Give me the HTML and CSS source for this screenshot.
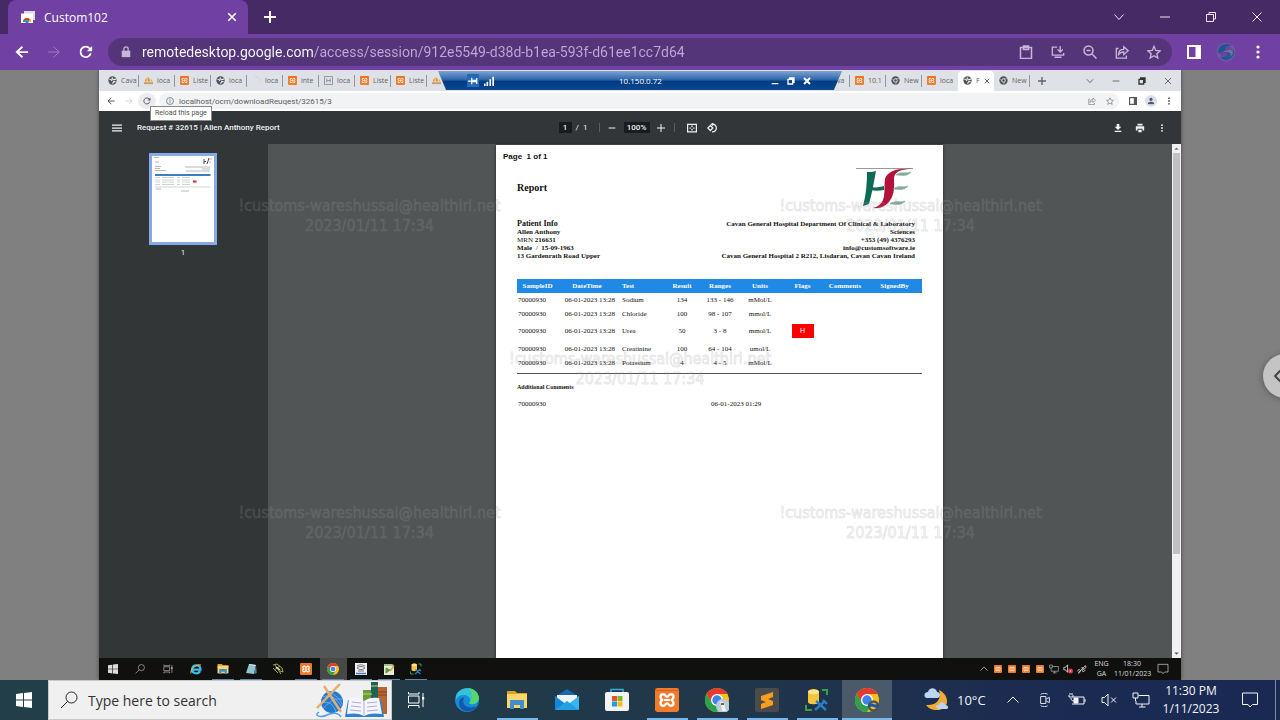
FILE: index.html
```html
<!DOCTYPE html>
<html lang="en">
<head>
<meta charset="utf-8">
<title>Custom102</title>
<link rel="stylesheet" href="styles.css">
</head>
<body>
<svg class="sprite" aria-hidden="true">
  <symbol id="i-close" viewBox="0 0 12 12"><path d="M1.500 1.500l9 9M10.500 1.500l-9 9"/></symbol>
  <symbol id="i-plus" viewBox="0 0 12 12"><path d="M6 0v12M0 6h12"/></symbol>
  <symbol id="i-minus" viewBox="0 0 12 12"><path d="M1 6h10"/></symbol>
  <symbol id="i-down" viewBox="0 0 12 12"><path d="M1.500 3.500L6 8.500l4.500-5"/></symbol>
  <symbol id="i-up" viewBox="0 0 12 12"><path d="M.5 8.500L6 3l5.500 5.500"/></symbol>
  <symbol id="i-restore" viewBox="0 0 12 12"><path d="M1.500 3.500h7v7h-7zM4 3.500v-2h6.500V8h-2"/></symbol>
  <symbol id="i-back" viewBox="0 0 16 16"><path d="M15 8H2.500M8.500 2L2 8l6.500 6"/></symbol>
  <symbol id="i-fwd" viewBox="0 0 16 16"><path d="M1 8h12.500M7.500 2L14 8l-6.500 6"/></symbol>
  <symbol id="i-reload" viewBox="0 0 16 16"><path d="M13.500 9.500A6 6 0 1 1 12.300 4L14 5.600"/><path d="M15 1v6H9z" fill="currentColor" stroke="none"/></symbol>
  <symbol id="i-lock" viewBox="0 0 12 14"><path d="M1 5.500h10V13H1z" fill="currentColor" stroke="none"/><path d="M3.500 6V3.500a2.500 2.500 0 0 1 5 0V6"/></symbol>
  <symbol id="i-share" viewBox="0 0 16 16"><path d="M4 4H1.500v11H13v-3M4 11c0-4 2-6 6-6V2l5 4.500-5 4.500V8C7 8 5.500 9 4 11z"/></symbol>
  <symbol id="i-star" viewBox="0 0 16 16"><path d="M8 1.500l2 4.700 5 .4-3.800 3.300 1.200 5L8 12.200 3.600 14.900l1.200-5L1 6.600l5-.4z"/></symbol>
  <symbol id="i-panel" viewBox="0 0 14 14"><path d="M1 1h12v12H1z"/><path d="M8.500 1H13v12H8.500z" fill="currentColor" stroke="none"/></symbol>
  <symbol id="i-dots" viewBox="0 0 4 14"><g fill="currentColor" stroke="none"><circle cx="2" cy="2" r="1.600"/><circle cx="2" cy="7" r="1.600"/><circle cx="2" cy="12" r="1.600"/></g></symbol>
  <symbol id="i-clip" viewBox="0 0 14 14"><path d="M1.500 2.500h11v11h-11zM4.500 1h5v3.500h-5z"/></symbol>
  <symbol id="i-install" viewBox="0 0 16 14"><path d="M7 1.500H1.500v9h13V8M10.500 0v6.500M7.500 4l3 3 3-3M4 13h8"/></symbol>
  <symbol id="i-zoomout" viewBox="0 0 14 14"><path d="M9 9l4.500 4.500M3.500 5.500h4"/><circle cx="5.500" cy="5.500" r="4.500"/></symbol>
  <symbol id="i-search" viewBox="0 0 18 18"><circle cx="11.500" cy="6.500" r="5.500"/><path d="M7.500 10.500L1 17"/></symbol>
  <symbol id="i-chat" viewBox="0 0 18 18"><path d="M1.500 2h15v11.500h-5L9 16l-2-2.500H1.500z"/></symbol>
  <symbol id="i-net" viewBox="0 0 18 16"><path d="M6.500 3.500H17v8.500H4V9M10 12v3M7 15h6.500M1 1h5v5H1zM3.500 6v3"/></symbol>
  <symbol id="i-mute" viewBox="0 0 16 14"><path d="M1 4.500h2.500L7 1v12L3.500 9.500H1zM10 4.500l5 5M15 4.500l-5 5"/></symbol>
  <symbol id="i-taskview" viewBox="0 0 18 18"><path d="M1.500 5h10.500v7H1.500zM1.500 1v2H12V1M1.500 17v-2.500H12V17M16 2v14"/><path d="M15 6h2.200v2.500H15z" fill="currentColor" stroke="none"/></symbol>
  <symbol id="i-win" viewBox="0 0 16 16"><path fill="currentColor" stroke="none" d="M0 2l7-1v6.500H0zM8 .9L16 0v7.500H8zM0 8.500h7V15l-7-1zM8 8.500h8V16l-8-1z"/></symbol>
  <symbol id="i-globe" viewBox="0 0 10 10"><circle cx="5" cy="5" r="4.600" fill="#50555a" stroke="none"/><path d="M1.500 3.500l2 .5 1 1.500M5 1.500l-.5 1.500L6 4l3-.5M5 8.500L6.500 6 8.500 6.500" stroke="#e9ecee" stroke-width="1.200"/></symbol>
  <symbol id="i-pma" viewBox="0 0 10 10"><path d="M0 7h10v2H0z" fill="#c69a66" stroke="none"/><path d="M1 6c0-2 1-3 2-4v4zM4 6V1c2 1 3 3 3 5zM8 6V3l1.500 3z" fill="#f59222" stroke="none"/></symbol>
  <symbol id="i-xampp" viewBox="0 0 10 10"><rect width="10" height="10" rx="1" fill="#ef7b2c" stroke="none"/><path d="M0 1h10" stroke="#d65f1c" stroke-width=".4"/><path d="M3.400 2.600C2 2.600 2 4.400 3.100 5 2 5.600 2 7.400 3.400 7.400c1 0 .9-1 1.600-1s.6 1 1.600 1C8 7.400 8 5.600 6.900 5 8 4.400 8 2.600 6.600 2.600c-1 0-.9 1-1.600 1s-.6-1-1.600-1z" stroke="#fff" stroke-width="1" stroke-linejoin="round"/><path d="M3.800 5h2.400" stroke="#fff" stroke-width=".9"/></symbol>
  <symbol id="i-greyx" viewBox="0 0 10 10"><path d="M.5.500h9v9h-9zM3 3v4M7 3v4M3 5h4" stroke="#8a8d8f"/></symbol>
  <symbol id="i-chromegrey" viewBox="0 0 10 10"><circle cx="5" cy="5" r="4.600" fill="#4f5459" stroke="none"/><circle cx="5" cy="5" r="1.900" fill="#4f5459" stroke="#e4e7e9"/><path d="M5 3h4.200M3.300 6L1.200 2.800M6.700 6L4.800 9.400" stroke="#e4e7e9" stroke-width=".6"/></symbol>
  <symbol id="i-chrome" viewBox="0 0 24 24"><circle cx="12" cy="12" r="12" fill="#fbc116" stroke="none"/><path fill="#e33b2e" stroke="none" d="M1.600 6A12 12 0 0 1 22.400 6H12l-5.200 9z"/><path fill="#2ba24c" stroke="none" d="M1.600 6a12 12 0 0 0 10.400 18l5.200-9-5.200 3-5.200-3z"/><circle cx="12" cy="12" r="6" fill="#fff" stroke="none"/><circle cx="12" cy="12" r="4.700" fill="#3f83ee" stroke="none"/></symbol>
  <symbol id="i-folder" viewBox="0 0 22 20"><path fill="#e0a020" stroke="none" d="M1 1h8l2 2h10v5H1z"/><path fill="#ffd767" stroke="none" d="M1 4h20v14H1z"/><path fill="#3f8fd0" stroke="none" d="M4 10h14v9h-4v-4H8v4H4z"/></symbol>
  <symbol id="i-db" viewBox="0 0 24 24"><path fill="#f5c53c" stroke="none" d="M3 4c0-4 11-4 11 0v10c0 3-11 3-11 0z"/><ellipse cx="8.500" cy="4" rx="5.500" ry="2.300" fill="#ffe48a" stroke="none"/><path stroke="#35a045" stroke-width="2" d="M17 2h5v5M1 17v5h6"/><path stroke="#2f7cc4" stroke-width="2.400" d="M10 22l10-9M11 13l10 9M18 12l4 4"/></symbol>
</svg>

<header class="tabstrip">
  <div class="tab">
    <svg class="favicon" viewBox="0 0 14 12"><path d="M3 0h11v9H3z" fill="#ddd"/><path d="M0 2.500h12V12H0z" fill="#fff"/><path d="M2 11a4 4 0 0 1 8 0H8l-2-2-2 2z" fill="#e33b2e"/><path d="M2 11h2.500V9L3 8z" fill="#2ba24c"/><path d="M8 11h2.500L9.500 8 8 9z" fill="#fbc116"/><circle cx="6" cy="10.500" r="1.800" fill="#3f83ee"/></svg>
    <span class="tab-title">Custom102</span>
    <button class="ico s10 bold" aria-label="Close tab"><svg><use href="#i-close"/></svg></button>
  </div>
  <button class="ico s12 bold newtab" aria-label="New tab"><svg><use href="#i-plus"/></svg></button>
  <div class="caption">
    <button class="ico s12" aria-label="Search tabs"><svg><use href="#i-down"/></svg></button>
    <button class="ico s12" aria-label="Minimize"><svg><use href="#i-minus"/></svg></button>
    <button class="ico s12" aria-label="Restore"><svg><use href="#i-restore"/></svg></button>
    <button class="ico s12" aria-label="Close"><svg><use href="#i-close"/></svg></button>
  </div>
</header>

<nav class="toolbar">
  <button class="ico s14 bold" aria-label="Back"><svg><use href="#i-back"/></svg></button>
  <button class="ico s14 dim" aria-label="Forward"><svg><use href="#i-fwd"/></svg></button>
  <button class="ico s14 bold" aria-label="Reload"><svg><use href="#i-reload"/></svg></button>
  <div class="omnibox">
    <span class="ico s12 lock"><svg><use href="#i-lock"/></svg></span>
    <input class="url" aria-label="Address" value="remotedesktop.google.com/access/session/912e5549-d38d-b1ea-593f-d61ee1cc7d64">
    <button class="ico s14" aria-label="Clipboard"><svg><use href="#i-clip"/></svg></button>
    <button class="ico s14" aria-label="Install"><svg><use href="#i-install"/></svg></button>
    <button class="ico s14" aria-label="Zoom"><svg><use href="#i-zoomout"/></svg></button>
    <button class="ico s14" aria-label="Share"><svg><use href="#i-share"/></svg></button>
    <button class="ico s14" aria-label="Bookmark"><svg><use href="#i-star"/></svg></button>
  </div>
  <button class="ico s14 bold" aria-label="Side panel"><svg><use href="#i-panel"/></svg></button>
  <button class="ico s20" aria-label="Profile"><svg viewBox="0 0 20 20"><circle cx="10" cy="10" r="8" stroke="#6c5a9e" stroke-width="3"/><path d="M2 11C2 2 11 0 16 4c-5-1-8 2-7 4s6 1 9-1" fill="#1c5699" stroke="none"/><path d="M18 9c1 8-9 12-14 6 5 1 8-1 7-3s-6-1-8 0" fill="#24559a" stroke="none"/><path d="M6 9c3 2 6 0 8 2s0 4-3 4c7 0 7-6 4-7s-6 2-9 1z" fill="#77728c" stroke="none"/></svg></button>
  <button class="ico s14 menu" aria-label="Menu"><svg><use href="#i-dots"/></svg></button>
</nav>

<main class="stage">
  <section class="remote">
    <div class="rtabs">
      <div class="rtab"><svg><use href="#i-globe"/></svg><span>Cava</span></div>
      <div class="rtab"><svg><use href="#i-pma"/></svg><span>loca</span></div>
      <div class="rtab"><svg><use href="#i-xampp"/></svg><span>Liste</span></div>
      <div class="rtab"><svg><use href="#i-globe"/></svg><span>loca</span></div>
      <div class="rtab"><svg viewBox="0 0 10 10"><path d="M3 1a5 5 0 0 1 6 6" stroke="#c4d6ee"/></svg><span>loca</span></div>
      <div class="rtab"><svg><use href="#i-xampp"/></svg><span>inte</span></div>
      <div class="rtab"><svg><use href="#i-greyx"/></svg><span>loca</span></div>
      <div class="rtab"><svg><use href="#i-xampp"/></svg><span>Liste</span></div>
      <div class="rtab"><svg><use href="#i-xampp"/></svg><span>Liste</span></div>
      <div class="rtab last"><svg><use href="#i-pma"/></svg></div>
      <div class="rtab push"><span>ava</span></div>
      <div class="rtab"><svg><use href="#i-xampp"/></svg><span>10.1</span></div>
      <div class="rtab"><svg><use href="#i-chromegrey"/></svg><span>New</span></div>
      <div class="rtab last"><svg><use href="#i-xampp"/></svg><span>loca</span></div>
      <div class="rtab active"><svg><use href="#i-globe"/></svg><span>F</span><button class="ico s6 bold" aria-label="Close tab"><svg><use href="#i-close"/></svg></button></div>
      <div class="rtab"><svg><use href="#i-chromegrey"/></svg><span>New</span></div>
      <button class="ico s8 bold rnew" aria-label="New tab"><svg><use href="#i-plus"/></svg></button>
      <div class="rcaption">
        <button class="ico s8" aria-label="Search tabs"><svg><use href="#i-down"/></svg></button>
        <button class="ico s8" aria-label="Minimize"><svg><use href="#i-minus"/></svg></button>
        <button class="ico s8 bold" aria-label="Restore"><svg><use href="#i-restore"/></svg></button>
        <button class="ico s8" aria-label="Close"><svg><use href="#i-close"/></svg></button>
      </div>
      <div class="rdp">
        <button class="ico s10 pin" aria-label="Pin"><svg viewBox="0 0 12 12"><path d="M0 6h4M4.500 2v8M10.500 2.500v7" stroke-width="1.500"/><path d="M5 4.500h5v3H5z" fill="currentColor" stroke="none"/></svg></button>
        <span class="ico s10"><svg viewBox="0 0 12 12"><path d="M1 12V9M4 12V7M7.500 12V4M11 12V1" stroke-width="2"/></svg></span>
        <span class="rdp-title">10.150.0.72</span>
        <button class="ico s8 bold" aria-label="Minimize session"><svg viewBox="0 0 12 12"><path d="M1 10h10"/></svg></button>
        <button class="ico s8 bold" aria-label="Restore session"><svg><use href="#i-restore"/></svg></button>
        <button class="ico s8 heavy" aria-label="Close session"><svg><use href="#i-close"/></svg></button>
      </div>
    </div>

    <div class="rbar">
      <button class="ico s8 bold" aria-label="Back"><svg><use href="#i-back"/></svg></button>
      <button class="ico s8 faint" aria-label="Forward"><svg><use href="#i-fwd"/></svg></button>
      <button class="ico s8 bold halo" aria-label="Reload this page"><svg><use href="#i-reload"/></svg></button>
      <div class="rbox">
        <span class="ico s8 site"><svg viewBox="0 0 12 12"><circle cx="6" cy="6" r="5.200"/><path d="M6 5v4M6 2.800v1.300"/></svg></span>
        <input class="rurl" aria-label="Remote address" value="localhost/ocm/downloadReuqest/32615/3">
        <button class="ico s8" aria-label="Share"><svg><use href="#i-share"/></svg></button>
        <button class="ico s8" aria-label="Bookmark"><svg><use href="#i-star"/></svg></button>
      </div>
      <button class="ico s8 bold" aria-label="Side panel"><svg><use href="#i-panel"/></svg></button>
      <button class="ico s8 avatar" aria-label="Profile"><svg viewBox="0 0 12 12"><path fill="currentColor" stroke="none" d="M6 1a2.500 2.500 0 1 1 0 5 2.500 2.500 0 0 1 0-5zM1 11c0-5 10-5 10 0z"/></svg></button>
      <button class="ico s8" aria-label="Menu"><svg><use href="#i-dots"/></svg></button>
      <div class="tip" role="tooltip">Reload this page</div>
    </div>

    <div class="pbar">
      <button class="ico s10 bold" aria-label="Toggle sidebar"><svg viewBox="0 0 12 12"><path d="M0 2.500h12M0 6h12M0 9.500h12"/></svg></button>
      <h1 class="ptitle">Request # 32615 | Allen Anthony Report</h1>
      <div class="pctl">
        <input class="pnum" aria-label="Page number" value="1">
        <span class="ptotal">/&nbsp; 1</span>
        <i class="bar"></i>
        <button class="ico s8 bold" aria-label="Zoom out"><svg><use href="#i-minus"/></svg></button>
        <input class="pzoom" aria-label="Zoom level" value="100%">
        <button class="ico s8 bold" aria-label="Zoom in"><svg><use href="#i-plus"/></svg></button>
        <i class="bar"></i>
        <button class="ico s10 bold" aria-label="Fit to page"><svg viewBox="0 0 12 12"><path d="M.7 1.500h10.600v9H.7zM6 3v2M6 7v2M3 6h1.500M7.500 6H9"/></svg></button>
        <button class="ico s10 bold" aria-label="Rotate"><svg viewBox="0 0 12 12"><path d="M4 3L1 6l3 3 3-3zM6 1.500c7-.5 7 9.500 0 9M7.500 0L5.500 1.500l2 1.500"/></svg></button>
      </div>
      <div class="pend">
        <button class="ico s8" aria-label="Download"><svg viewBox="0 0 12 12"><path fill="currentColor" stroke="none" d="M4 0h4v4h3L6 9 1 4h3zM1 10.300h10V12H1z"/></svg></button>
        <button class="ico s10" aria-label="Print"><svg viewBox="0 0 12 12"><path fill="currentColor" stroke="none" d="M3 1h6v2H3zM1 4h10v5H9V7H3v2H1zM4 8h4v3H4z"/></svg></button>
        <button class="ico s8" aria-label="More"><svg><use href="#i-dots"/></svg></button>
      </div>
    </div>

    <div class="viewer">
      <aside class="side">
        <button class="thumb" aria-label="Page one thumbnail">
          <svg viewBox="0 0 62 86"><path d="M0 0h62v86H0z" fill="#fff"/><path d="M2 1.500h5M3 6h4M3 10.500h6M3 12.500h5M3 14.500h11M33 11h25M50 13h8M34 15h24M4 33h5M29 35h8" stroke="#888" stroke-width=".6"/><path d="M52 3v5M52 5.500h2" stroke="#2a6050"/><path d="M57 2l-2 6" stroke="#b02040"/><path d="M57 3h3M57 6h2" stroke="#7aa090" stroke-width=".7"/><path d="M3 19h55.500" stroke="#3a7fc0" stroke-width="2"/><path d="M3 21.500h5M10 21.500h12M25 21.500h3M30 21.500h8M3 24h5M10 24h12M25 24h3M30 24h8M3 26h5M10 26h12M25 26h3M30 26h8M3 28.500h5M10 28.500h12M25 28.500h3M30 28.500h8" stroke="#9aa" stroke-width=".5"/><path d="M3 31h55.500" stroke="#aaa" stroke-width=".5"/><path d="M41 24.500h3.500v2H41z" fill="#e0202a"/></svg>
        </button>
        <span class="thumb-no">1</span>
      </aside>
      <div class="canvas">
        <article class="page">
          <p class="pageno">Page&nbsp; 1 of 1</p>
          <div class="rhead">
            <h2>Report</h2>
            <svg class="logo" viewBox="0 0 58 42" role="img" aria-label="HSE">
              <path d="M0 .5h57" stroke="#999"/>
              <path d="M11 4c3 0 6 0 9-1-2 11-4 22-7 33-2 1-4 1-6 2 3-11 4-22 4-34z" fill="#0d6b55"/>
              <path d="M15 19c5 1 9 0 13-1v4c-5 1-9 1-14 0z" fill="#0d6b55"/>
              <path d="M56 1C46 1 39 3 38 10c0 7 1 12-2 19-4 8-10 12-19 11 7-2 10-6 11-12s0-11 1-17C31 3 42 0 56 1z" fill="#b3123c"/>
              <path d="M40 7c5-4 9-1 15-3-4 5-9 3-15 3zM37 21c5-4 9-1 15-3-4 5-9 3-15 3zM34 36c5-4 9-1 15-3-4 5-9 3-15 3z" fill="#83ab9a" stroke="#83ab9a" stroke-width=".6"/>
            </svg>
          </div>
          <div class="info">
            <address><strong class="who">Patient Info</strong><b>Allen Anthony</b><span>MRN <b>216631</b></span><span><b>Male</b> &nbsp;/&nbsp; <b>15-09-1963</b></span><b>13 Gardenrath Road Upper</b></address>
            <address class="org"><b>Cavan General Hospital Department Of Clinical &amp; Laboratory Sciences</b><b>+353 (49) 4376293</b><b>info@customsoftware.ie</b><b>Cavan General Hospital 2 R212, Lisdaran, Cavan Cavan Ireland</b></address>
          </div>
          <table class="results">
            <colgroup><col class="c41"><col class="c58"><col class="c46"><col class="c40"><col class="c36"><col class="c44"><col class="c41"><col class="c44"><col></colgroup>
            <thead><tr><th>SampleID</th><th>DateTime</th><th>Test</th><th>Result</th><th>Ranges</th><th>Units</th><th>Flags</th><th>Comments</th><th>SignedBy</th></tr></thead>
            <tbody>
              <tr><td>70000930</td><td>06-01-2023 13:28</td><td>Sodium</td><td>134</td><td>133 - 146</td><td>mMol/L</td><td></td><td></td><td></td></tr>
              <tr><td>70000930</td><td>06-01-2023 13:28</td><td>Chloride</td><td>100</td><td>98 - 107</td><td>mmol/L</td><td></td><td></td><td></td></tr>
              <tr class="high"><td>70000930</td><td>06-01-2023 13:28</td><td>Urea</td><td>50</td><td>3 - 8</td><td>mmol/L</td><td><span class="flag">H</span></td><td></td><td></td></tr>
              <tr><td>70000930</td><td>06-01-2023 13:28</td><td>Creatinine</td><td>100</td><td>64 - 104</td><td>umol/L</td><td></td><td></td><td></td></tr>
              <tr><td>70000930</td><td>06-01-2023 13:28</td><td>Potassium</td><td>4</td><td>4 - 5</td><td>mMol/L</td><td></td><td></td><td></td></tr>
            </tbody>
          </table>
          <section class="extra">
            <h3>Additional Comments</h3>
            <div class="note"><span>70000930</span><time>06-01-2023 01:29</time></div>
          </section>
        </article>
      </div>
      <div class="scroll"><svg viewBox="0 0 8 8"><path d="M2 5l2-2 2 2z" fill="#777"/></svg><i></i><svg viewBox="0 0 8 8"><path d="M2 3l2 2 2-2z" fill="#555"/></svg></div>
    </div>

    <footer class="rtask">
      <div class="rapps">
        <button class="ico s10" aria-label="Remote start"><svg><use href="#i-win"/></svg></button>
        <button class="ico s10" aria-label="Remote search"><svg><use href="#i-search"/></svg></button>
        <button class="ico s10" aria-label="Remote task view"><svg><use href="#i-taskview"/></svg></button>
        <button class="ico s12" aria-label="Internet Explorer"><svg viewBox="0 0 24 24"><path d="M4 13h17c0-11-16-11-17 0 0 9 13 10 16 3" stroke="#3fb8ee" stroke-width="4.500"/><path d="M2 21C-1 15 12 1 22 4" stroke="#f3c33c" stroke-width="2"/></svg></button>
        <button class="ico s12 run" aria-label="Remote files"><svg><use href="#i-folder"/></svg></button>
        <button class="ico s12 run" aria-label="Notepad"><svg viewBox="0 0 12 12"><g stroke="none"><path d="M4 1l7 1-2 9-8-1z" fill="#8fc3cf"/><path d="M4 1l7 1v1L4 2z" fill="#d7e9ee"/><path d="M9 11l2-9 .8 8z" fill="#4a7f92"/></g></svg></button>
        <button class="ico s12" aria-label="Interface tool"><svg viewBox="0 0 12 12"><path d="M1 2l4-1 5 4 1 4-3-1M1 5l5 5M3 2l6 9M2 7l6-4" stroke="#a5ab42"/><path d="M4 4l4 3" stroke="#ddd" stroke-width="1.500"/></svg></button>
        <button class="ico s12 run" aria-label="Remote XAMPP"><svg><use href="#i-xampp"/></svg></button>
        <button class="ico s12 run cur" aria-label="Remote Chrome"><svg><use href="#i-chrome"/></svg></button>
        <button class="ico s12 run" aria-label="Lookup"><svg viewBox="0 0 12 12"><path d="M0 0h12v12H0z" fill="#eef1f4" stroke="none"/><path d="M2 3c3-2 6-1 8 0M2 5c2-2 6-2 8 0-2 2-6 2-8 0zM3 8h6" stroke="#445" stroke-width=".7"/><path d="M1 10.500h10" stroke="#4a7dc0" stroke-width="1.500"/></svg></button>
        <button class="ico s12 run" aria-label="Editor"><svg viewBox="0 0 12 12"><path d="M1 1h8l2 2v9H1z" fill="#e6edda" stroke="none"/><path d="M1 2h10" stroke="#5b9a35"/><path d="M3 5l4 2-4 3z" fill="#5b9a35" stroke="#5b9a35"/><path d="M7 8l4-5" stroke="#d9a030" stroke-width="1.500"/></svg></button>
        <button class="ico s12 run" aria-label="Remote database tool"><svg><use href="#i-db"/></svg></button>
      </div>
      <div class="rtray">
        <span class="ico s8"><svg><use href="#i-up"/></svg></span>
        <span class="ico s8"><svg><use href="#i-xampp"/></svg></span>
        <span class="ico s8"><svg><use href="#i-xampp"/></svg></span>
        <span class="ico s8"><svg><use href="#i-xampp"/></svg></span>
        <span class="ico s8"><svg><use href="#i-xampp"/></svg></span>
        <span class="ico s10"><svg><use href="#i-net"/></svg></span>
        <span class="ico s10"><svg viewBox="0 0 12 12"><path d="M1 4h2l2.500-3v9L3 7H1z"/><circle cx="9" cy="8.500" r="3" fill="#e0303a" stroke="none"/><path d="M8 7.500l2 2M10 7.500l-2 2"/></svg></span>
        <span class="ico s10"><svg viewBox="0 0 12 12"><path d="M1 9c0-4 4-2 3 0s-3 3-2 1L10 2l1 2-5 4c1 2 3 1 4-1M5 5c1-2 3 0 2 2"/></svg></span>
        <span class="lang">ENG<br>GA</span>
        <span class="rclock">18:30<br>11/01/2023</span>
        <button class="ico s12 rnote" aria-label="Remote notifications"><svg><use href="#i-chat"/></svg></button>
      </div>
    </footer>

    <div class="wm a">!customs-wareshussai@healthirl.net<br>2023/01/11 17:34</div>
    <div class="wm b">!customs-wareshussai@healthirl.net<br>2023/01/11 17:34</div>
    <div class="wm c">!customs-wareshussai@healthirl.net<br>2023/01/11 17:34</div>
    <div class="wm d">!customs-wareshussai@healthirl.net<br>2023/01/11 17:34</div>
    <div class="wm e">!customs-wareshussai@healthirl.net<br>2023/01/11 17:34</div>
  </section>
  <button class="drawer" aria-label="Session options"><svg viewBox="0 0 12 14"><path d="M9 1L3 7l6 6"/></svg></button>
</main>

<footer class="taskbar">
  <button class="ico s16 start" aria-label="Start"><svg><use href="#i-win"/></svg></button>
  <label class="search">
    <span class="ico s18"><svg><use href="#i-search"/></svg></span>
    <input type="text" placeholder="Type here to search" aria-label="Search">
    <svg class="art" viewBox="0 0 72 36">
      <circle cx="17" cy="20" r="11" fill="#2479cc"/><path d="M8 15c7-3 13 0 18 9M7 21c6-2 11 0 14 9M12 11c6 0 12 4 15 11M8 27c5-7 12-11 19-10" stroke="#74b6f2" stroke-width=".8"/><path d="M2 26L25 2M9 4l17 26" stroke="#e4ad72" stroke-width="2.500"/><path d="M4 30c-6 4 2 6 8 3s12-2 14 2" stroke="#4a9ee8" stroke-width="1.500"/>
      <path d="M48 8h9v25h-9z" fill="#6c9c37"/><path d="M56 0h7v31h-7z" fill="#206353"/><path d="M63 5h9v27h-9z" fill="#b96434"/><path d="M63 10h9M63 13h9" stroke="#87401e"/><path d="M56 4h7M48 12h9" stroke="#bdd685"/><path d="M33 18l16 2 17-2 3 17H30z" fill="#2d83d0"/><path d="M34 16c6-1 12 0 15 3 4-3 9-4 15-3l3 16c-7-1-13-1-18 2-5-3-11-3-17-2z" fill="#f6f5ff"/><path d="M49 19v14M37 20l9 1M36 24l10 1M35 28l11 1M52 21l10-1M52 25l10-1M52 29l11-1" stroke="#aeadd2"/>
    </svg>
  </label>
  <button class="ico s18 tview" aria-label="Task view"><svg><use href="#i-taskview"/></svg></button>
  <div class="apps">
    <button class="ico s24" aria-label="Edge"><svg viewBox="0 0 24 24"><circle cx="12" cy="12" r="12" fill="#168bd7"/><path d="M1 8C5-3 23-2 24 10c0 6-8 8-10 5 3-3 0-8-5-8-4 0-7 2-8 5z" fill="#35c2d8"/><path d="M13 0c8 1 13 9 10 13-3 4-8 3-9 2 5-5 3-11-1-15z" fill="#58d66c"/><path d="M9 10c-3 7 4 12 13 8-6 9-18 6-18-3 0-4 3-6 5-5z" fill="#1459aa"/></svg></button>
    <button class="ico s22 run" aria-label="File Explorer"><svg><use href="#i-folder"/></svg></button>
    <button class="ico s24" aria-label="Mail"><svg viewBox="0 0 24 24"><path d="M0 9l12-8 12 8v13H0z" fill="#1769b5"/><path d="M2 7h20v8H2z" fill="#eef7fc"/><path d="M0 8l12 9L0 22z" fill="#1687d8"/><path d="M24 8l-12 9 12 5z" fill="#38b6f0"/><path d="M0 22l12-9 12 9z" fill="#23a0e4"/></svg></button>
    <button class="ico s24" aria-label="Store"><svg viewBox="0 0 24 24"><path d="M6 5V1.500h12V5" stroke="#35aee0" stroke-width="1.500"/><rect y="4" width="24" height="19" rx="2" fill="#f3f3f3"/><path d="M7 8h5v5H7z" fill="#e8512d"/><path d="M12.500 8h5v5h-5z" fill="#80b928"/><path d="M7 13.500h5v5H7z" fill="#1d9fe2"/><path d="M12.500 13.500h5v5h-5z" fill="#f9b91f"/></svg></button>
    <button class="ico s24 run" aria-label="XAMPP"><svg><use href="#i-xampp"/></svg></button>
    <button class="ico s24 run" aria-label="Chrome"><svg viewBox="0 0 24 24"><use href="#i-chrome"/><circle cx="18" cy="18" r="7" fill="#b6cde0"/><path d="M15 13l4 2 2 8h-4l-1-6z" fill="#f6f2e8"/><path d="M16 15h3v2h-3z" fill="#7a6244"/></svg></button>
    <button class="ico s24 run" aria-label="Sublime Text"><svg viewBox="0 0 24 24"><rect width="24" height="24" rx="2" fill="#4b4b4b"/><path d="M18 4v5l-5 2 5 2v4L6 21v-5l5-2-5-2V8z" fill="#ff9d1f"/></svg></button>
    <button class="ico s24 run" aria-label="Database tool"><svg><use href="#i-db"/></svg></button>
    <button class="ico s24 run cur" aria-label="Chrome session"><svg viewBox="0 0 24 24"><use href="#i-chrome"/><circle cx="18.500" cy="18" r="4.500" stroke="#4d545c" stroke-width="2.500"/><path d="M14 18c3-4 6 3 9-1" stroke="#1c5699" stroke-width="3"/></svg></button>
  </div>
  <div class="tray">
    <svg class="moon" viewBox="0 0 25 24"><path d="M15 2c12 6 10 20-2 20-5 0-9-2-11-5 10 1 16-5 13-15z" fill="#f3ab33"/><path d="M3 10c-4-1-3-6 1-6 1-5 8-5 9 0 4 0 4 6 0 6zM14 21c-3-1-2-5 1-4 1-4 6-3 6 0 4 0 4 4 1 4z" fill="#bcd4f6"/></svg>
    <span class="temp">10°C</span>
    <button class="ico s12" aria-label="Hidden icons"><svg><use href="#i-up"/></svg></button>
    <span class="ico s14"><svg viewBox="0 0 14 16"><path d="M2 4h6v8H2zM8 7l4-2v6L8 9M2 1.500C5 0 8 0 10 1.500M2 14.500c3 1.500 6 1.500 8 0"/></svg></span>
    <span class="ico s18"><svg viewBox="0 0 18 14"><path d="M5 4h11v7H4M17 6v3M1 2v2h4V2M2 0v2M4 0v2M3 5c0 2 1 3 3 3"/><path d="M6 5h4v5H6z" fill="currentColor"/></svg></span>
    <span class="ico s16"><svg><use href="#i-mute"/></svg></span>
    <span class="ico s18"><svg><use href="#i-net"/></svg></span>
    <span class="clock">11:30 PM<br>1/11/2023</span>
    <button class="ico s18 notif" aria-label="Notifications"><svg><use href="#i-chat"/></svg></button>
  </div>
</footer>
</body>
</html>
```
FILE: styles.css
```css
* { box-sizing: border-box; }
body {
  margin: 0;
  height: 100vh;
  display: flex;
  flex-direction: column;
  overflow: hidden;
  font-family: "Open Sans", "Noto Sans", sans-serif;
  color: #fff;
}
button, input { margin: 0; padding: 0; border: 0; background: none; color: inherit; font: inherit; outline: 0; border-radius: 0; }
h1, h2, h3, p, address { margin: 0; font-style: normal; }
svg { fill: none; display: block; }
.sprite { position: absolute; width: 0; height: 0; }

/* Icon boxes */
.ico { display: flex; align-items: center; justify-content: center; flex: none; }
.ico > svg { stroke: currentColor; stroke-width: 1; }
.bold > svg { stroke-width: 2; }
.heavy > svg { stroke-width: 3; }
.s6 > svg { width: 6px; height: 6px; }
.s8 > svg { width: 8px; height: 8px; }
.s10 > svg { width: 10px; height: 10px; }
.s12 > svg { width: 12px; height: 12px; }
.s14 > svg { width: 14px; height: 14px; }
.s16 > svg { width: 16px; height: 16px; }
.s18 > svg { width: 18px; height: 18px; }
.s20 > svg { width: 20px; height: 20px; }
.s22 > svg { width: 22px; height: 22px; }
.s24 > svg { width: 24px; height: 24px; }

/* Local browser */
.tabstrip { flex: none; height: 34px; display: flex; align-items: center; background: #462a66; padding-left: 8px; }
.tab { width: 240px; height: 34px; display: flex; align-items: center; gap: 9px; padding: 0 11px 0 13px; background: #7040a2; border-radius: 8px 8px 0 0; font-size: 12px; }
.favicon { width: 14px; height: 12px; }
.tab-title { flex: 1; }
.newtab { width: 44px; }
.caption { margin-left: auto; display: flex; color: #eee4f6; }
.caption .ico { width: 46px; height: 28px; }
.toolbar { flex: none; height: 36px; display: flex; align-items: center; background: #7040a2; padding: 0 7px 0 6px; }
.toolbar > .ico { width: 32px; height: 28px; }
.toolbar > .menu { width: 31px; }
.dim { color: #a686c8; }
.omnibox { flex: 1; height: 28px; margin: 0 6px; display: flex; align-items: center; background: #55357a; border-radius: 14px; padding: 0 2px 0 12px; color: #c7b6d8; }
.omnibox .ico { width: 32px; }
.omnibox .lock { width: 12px; margin-right: 10px; }
.omnibox .ico > svg { stroke-width: 1.5; }
.url {
  flex: 1; min-width: 0; height: 24px; font: 14px Roboto, sans-serif;
  background: linear-gradient(to right, #fff 171px, #c0a9d8 171px);
  -webkit-background-clip: text; background-clip: text;
  -webkit-text-fill-color: transparent;
}

/* Remote session */
.stage { flex: 1; min-height: 0; position: relative; display: flex; padding: 0 99px; background: #808080; overflow: hidden; }
.remote { flex: 1; min-width: 0; position: relative; display: flex; flex-direction: column; box-shadow: 0 0 4px #444; }
.rtabs { flex: none; position: relative; height: 21px; display: flex; align-items: center; padding-left: 4px; background: #dee1e5; color: #5f6368; font-size: 7px; }
.rtab { width: 36px; height: 20px; flex: none; display: flex; align-items: center; gap: 4px; padding-left: 5px; }
.rtab:not(.last, .active) { background: linear-gradient(#94989c, #94989c) right center / 1px 12px no-repeat; }
.rtab > svg { width: 9px; height: 9px; flex: none; }
.rtab span { white-space: nowrap; }
.push { margin-left: auto; width: 22px; }
.rtab.active { background: #fff; border-radius: 4px 4px 0 0; }
.rnew { width: 24px; height: 20px; }
.rcaption { display: flex; margin-left: 23px; color: #333; }
.rcaption .ico { width: 26px; height: 20px; }
.rdp {
  position: absolute; top: 1px; left: 50%; width: 404px; margin-left: -202px; height: 19px; padding: 0 30px 0 29px;
  display: flex; align-items: center; gap: 5px; color: #fff;
  background: linear-gradient(#7da3d3, #2f66a8 45%, #003c84 55%, #0a478f);
  clip-path: polygon(0 0, 100% 0, 98% 100%, 2% 100%);
}
.pin { background: #2469b8; width: 12px; height: 13px; }
.rdp-title { flex: 1; text-align: center; font-size: 8px; padding-left: 18px; }
.rdp .s8 { width: 11px; }
.rbar { flex: none; position: relative; height: 20px; display: flex; align-items: center; padding: 0 3px; background: #fff; color: #55595e; }
.rbar > .ico { width: 18px; height: 18px; }
.rbar > .halo { height: 16px; background: #ececee; border-radius: 50%; }
.faint { color: #b4b7ba; }
.avatar { color: #50566e; }
.avatar svg { background: #dbe0ea; border-radius: 50%; box-shadow: 0 0 0 2px #dbe0ea; }
.rbox { flex: 1; height: 16px; margin: 0 5px 0 3px; display: flex; align-items: center; border-radius: 8px; background: #f1f3f4; padding: 0 0 0 6px; }
.rbox > .ico { width: 18px; }
.rbox > .site { width: 10px; margin-right: 4px; }
.rurl { flex: 1; min-width: 0; height: 14px; font: 8px Roboto, sans-serif; color: #5a5e62; }
.tip { position: absolute; left: 51px; top: 15px; height: 15px; padding: 0 4px; border: 1px solid #888; background: #fff; color: #505050; font: 7px/13px Roboto, sans-serif; white-space: nowrap; z-index: 3; }

/* PDF viewer */
.pbar { flex: none; height: 33px; display: grid; grid-template-columns: 1fr auto 1fr; grid-template-areas: "t c e"; align-items: center; background: #323639; color: #f1f1f1; font-family: Roboto, sans-serif; font-size: 8px; }
.pbar > .ico { grid-area: t; justify-self: start; margin-left: 13px; height: 20px; }
.pbar > .ico > svg { stroke-width: 1.5; }
.ptitle { grid-area: t; margin-left: 38px; font-size: 8px; font-weight: 500; white-space: nowrap; }
.pctl { grid-area: c; display: flex; align-items: center; }
.pctl input { height: 11px; background: #191b1c; text-align: center; font-weight: 500; }
.pnum { width: 13px; }
.ptotal { width: 20px; text-align: center; }
.pzoom { width: 26px; }
.pctl .ico { width: 23px; height: 20px; }
.pctl .s10 { width: 20px; }
.pctl .bar { width: 1px; height: 9px; margin: 0 1px 0 7px; background: #5a5e60; }
.pctl .bar ~ .bar { margin: 0 7px 0 1px; }
.pctl .ico > svg { stroke-width: 1.5; }
.pend { grid-area: e; justify-self: end; display: flex; padding-right: 8px; }
.pend .ico { width: 22px; height: 20px; }
.viewer { flex: 1; min-height: 0; display: flex; background: #525556; }
.side { width: 169px; flex: none; display: flex; flex-direction: column; align-items: center; padding: 9px 1px 0 0; background: #323637; font: 7px Roboto, sans-serif; }
.thumb { border: 3px solid #86aae8; width: 68px; height: 92px; }
.thumb svg { width: 62px; height: 86px; }
.thumb-no { margin-top: 4px; }
.canvas { flex: 1; min-width: 0; display: flex; justify-content: center; padding: 1px 1px 0 0; }
.page { width: 447px; padding: 0 21px; background: #fff; color: #111; font: 7px/8px "Liberation Serif", serif; box-shadow: 0 0 3px #222; overflow: hidden; }
.pageno { margin: 8px 0 0 -14px; font: 700 8px/8px "Liberation Sans", sans-serif; }
.rhead { display: flex; justify-content: space-between; margin: 7px 8px 0 0; height: 42px; }
.rhead h2 { font-size: 10px; line-height: 12px; margin-top: 14px; }
.logo { width: 58px; height: 42px; }
.info { display: flex; justify-content: space-between; margin: 9px 7px 0 0; height: 41px; }
.info address { display: flex; flex-direction: column; white-space: pre-wrap; }
.info .who { font-size: 8px; line-height: 9px; }
.info .org { width: 204px; margin-top: 1px; text-align: right; }
.results { width: 100%; margin-top: 19px; table-layout: fixed; border-collapse: collapse; border-bottom: 1px solid #555; text-align: center; white-space: nowrap; }
.results th { height: 14px; padding: 0; background: #2088e5; color: #fff; }
.results td { height: 14px; padding: 0; }
.results tr.high td { height: 21px; padding-bottom: 1px; }
.results tr:last-child td { padding-bottom: 3px; height: 17px; }
.results td:first-child { text-align: left; padding-left: 1px; }
.results td:nth-child(2) { text-align: right; padding-right: 1px; }
.results tr :nth-child(3) { text-align: left; padding-left: 6px; }
.c36 { width: 36px; } .c40 { width: 40px; } .c41 { width: 41px; } .c44 { width: 44px; } .c46 { width: 46px; } .c58 { width: 58px; }
.flag { display: block; width: 22px; height: 14px; margin: 0 auto; background: #f00; color: #fff; font: 7px/14px "Liberation Sans", sans-serif; }
.extra h3 { margin-top: 9px; font-size: 6px; line-height: 8px; }
.note { display: grid; grid-template-columns: 193px 1fr; margin-top: 9px; padding-left: 1px; }
.scroll { width: 9px; flex: none; display: flex; flex-direction: column; align-items: center; background: #f1f1f1; }
.scroll svg { width: 9px; height: 9px; }
.scroll i { width: 7px; flex: 0 0 78%; margin-bottom: auto; background: #c1c1c1; }

/* Session watermark */
.wm {
  position: absolute; transform: translateX(-50%); pointer-events: none; text-align: center; white-space: nowrap;
  font: 16px/20px "DejaVu Sans Condensed", "DejaVu Sans", sans-serif;
  color: rgba(255, 255, 255, .08); -webkit-text-stroke: 1px rgba(130, 130, 130, .2);
}
.wm.a { left: 25%; top: 126px; }
.wm.b { left: 75%; top: 126px; }
.wm.c { left: 50%; top: 279px; }
.wm.d { left: 25%; top: 433px; }
.wm.e { left: 75%; top: 433px; }
.drawer { position: absolute; right: -27px; top: 284px; width: 44px; height: 44px; border-radius: 50%; background: #c4c4c4; box-shadow: 0 1px 6px #555; padding-left: 9px; color: #444; }
.drawer svg { width: 12px; height: 14px; stroke: currentColor; stroke-width: 2; }

/* Remote taskbar */
.rtask { flex: none; height: 22px; display: flex; justify-content: space-between; background: #10100e; color: #ddd; font-size: 7px; line-height: 10px; text-align: center; }
.rapps { width: 331px; display: flex; }
.rapps .ico { flex: 1; }
.rapps .run { background: linear-gradient(#6189ad, #6189ad) center bottom / 22px 1px no-repeat; }
.rapps .cur { background-color: #464947; }
.rtray { display: flex; align-items: center; padding-right: 5px; }
.rtray > .ico { width: 14px; }
.lang { width: 25px; }
.rclock { width: 36px; }
.rtray > .rnote { width: 26px; }

/* Local taskbar */
.taskbar { flex: none; height: 40px; display: flex; background: linear-gradient(to right, #223f49, #20384a 55%, #1c2b50 80%, #1a2954); }
.start { width: 48px; }
.search { width: 344px; display: flex; align-items: center; padding: 0 4px 0 11px; background: #f0f0f0; border: 1px solid #c9c9c9; color: #222; }
.search input { flex: 1; min-width: 0; margin-left: 10px; height: 30px; font-size: 14px; }
.search input::placeholder { color: #333; opacity: 1; }
.art { width: 72px; height: 36px; }
.tview { width: 48px; }
.apps { display: flex; margin-left: 2px; }
.apps .ico { width: 50px; }
.apps svg { stroke: none; }
.apps .run { background: linear-gradient(#76b9ed, #76b9ed) center bottom / 41px 2px no-repeat; }
.apps .cur { background: linear-gradient(#76b9ed, #76b9ed) center bottom / 50px 2px no-repeat, #4a5a6b; }
.tray { margin-left: auto; display: flex; align-items: center; color: #f2f4f8; padding-right: 4px; }
.moon { width: 25px; height: 24px; }
.temp { font-size: 13px; width: 48px; padding-left: 8px; }
.tray .ico { width: 32px; }
.clock { width: 68px; font-size: 12px; line-height: 18px; text-align: center; white-space: nowrap; }
.tray .notif { width: 51px; height: 40px; border-right: 1px solid #7d88a6; }
```
